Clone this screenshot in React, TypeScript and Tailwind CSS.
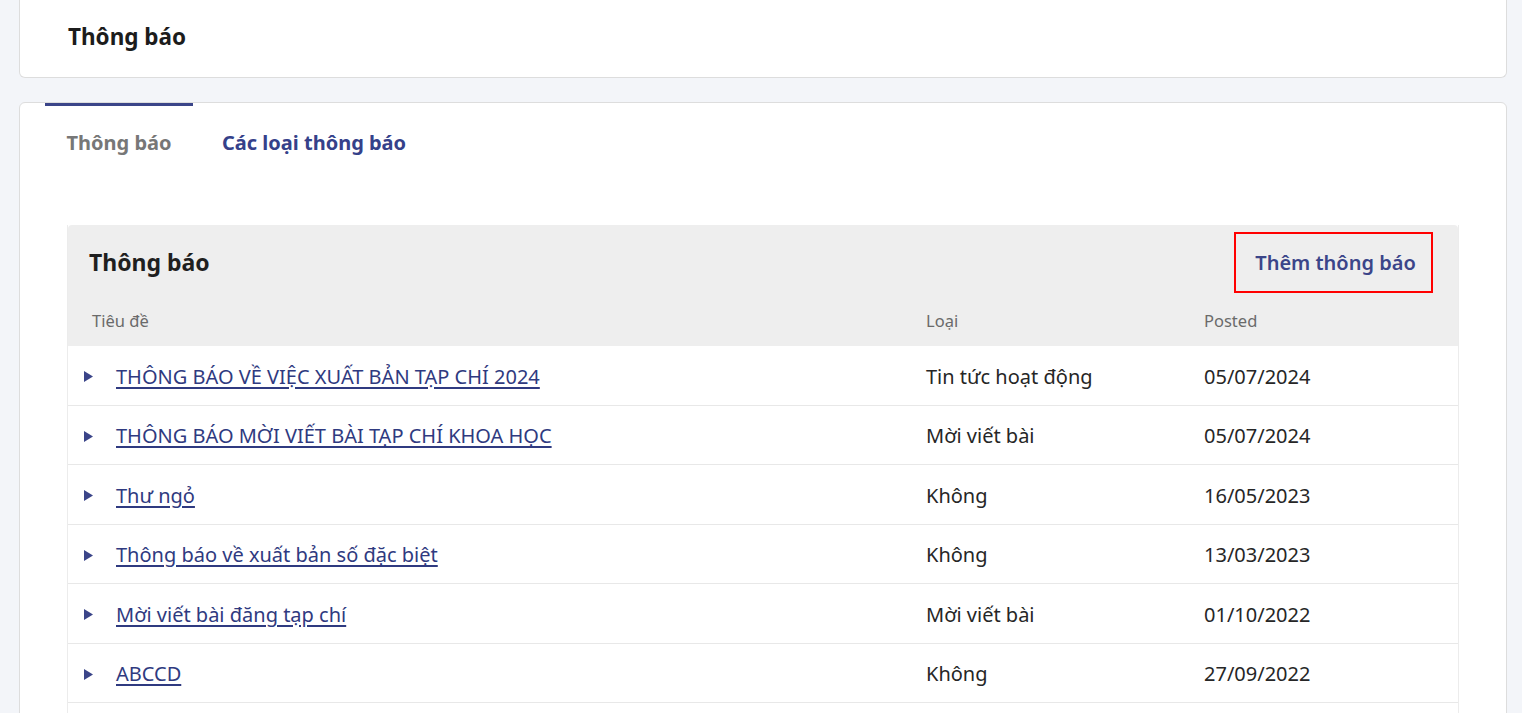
import React from 'react';

type Notice = { title: string; type: string; posted: string };

const notices: Notice[] = [
  { title: 'THÔNG BÁO VỀ VIỆC XUẤT BẢN TẠP CHÍ 2024', type: 'Tin tức hoạt động', posted: '05/07/2024' },
  { title: 'THÔNG BÁO MỜI VIẾT BÀI TẠP CHÍ KHOA HỌC', type: 'Mời viết bài', posted: '05/07/2024' },
  { title: 'Thư ngỏ', type: 'Không', posted: '16/05/2023' },
  { title: 'Thông báo về xuất bản số đặc biệt', type: 'Không', posted: '13/03/2023' },
  { title: 'Mời viết bài đăng tạp chí', type: 'Mời viết bài', posted: '01/10/2022' },
  { title: 'ABCCD', type: 'Không', posted: '27/09/2022' },
];

function Caret() {
  return (
    <svg width="9" height="11" viewBox="0 0 9 11" className="shrink-0">
      <path d="M0 0 L9 5.5 L0 11 Z" fill="#3b4589" />
    </svg>
  );
}

export default function App() {
  return (
    <div
      className="h-[713px] overflow-hidden bg-[#f3f5f9] pl-[19px] pr-[15px] text-[#222]"
      style={{ fontFamily: '"Noto Sans", "Open Sans", sans-serif' }}
    >
      {/* page header */}
      <div className="h-[78px] bg-white border-x border-b border-[#dddddd] rounded-b-md flex items-center pl-[48px] pb-[4px]">
        <h1 className="text-[22.5px] font-bold text-[#1c1c1c]">Thông báo</h1>
      </div>

      <div className="mt-[24px] bg-white border border-[#dddddd] rounded-t-md h-[700px]">
        {/* tabs */}
        <div className="flex pl-[25px] h-[76px]">
          <div className="w-[148px] border-t-[3px] border-[#3b4589] flex justify-center pt-[22px]">
            <span className="text-[20px] font-bold text-[#777777]">Thông báo</span>
          </div>
          <div className="pl-[29px] pt-[25px]">
            <span className="text-[20px] font-bold text-[#35418a]">Các loại thông báo</span>
          </div>
        </div>

        {/* list panel */}
        <div className="mt-[46px] mx-[47px] border-x border-[#ececec] h-[600px]">
          <div className="bg-[#eeeeee] rounded-t-sm">
            <div className="flex items-center justify-between pl-[21px] pr-[25px] pt-[7px] h-[68px]">
              <h2 className="text-[23px] font-bold text-[#1f1f1f]">Thông báo</h2>
              <button className="h-[61px] w-[199px] border-2 border-[#ff0000] text-[20px] font-semibold text-[#3b4589] pl-[4px]">
                Thêm thông báo
              </button>
            </div>
            <div className="flex h-[53px] items-center text-[16.5px] text-[#6a6a6a] pt-[3px]">
              <div className="w-[858px] pl-[24px]">Tiêu đề</div>
              <div className="w-[278px]">Loại</div>
              <div>Posted</div>
            </div>
          </div>
          {notices.map((n) => (
            <div key={n.title} className="flex h-[59.5px] items-center border-b border-[#e8e8e8] text-[20px] pt-[3px]">
              <div className="w-[858px] pl-[16px] flex items-center gap-[23px]">
                <Caret />
                <a href="#" className="text-[#2f3a80] underline underline-offset-[3px]">
                  {n.title}
                </a>
              </div>
              <div className="w-[278px] text-[#262626]">{n.type}</div>
              <div className="text-[#262626]">{n.posted}</div>
            </div>
          ))}
        </div>
      </div>
    </div>
  );
}
